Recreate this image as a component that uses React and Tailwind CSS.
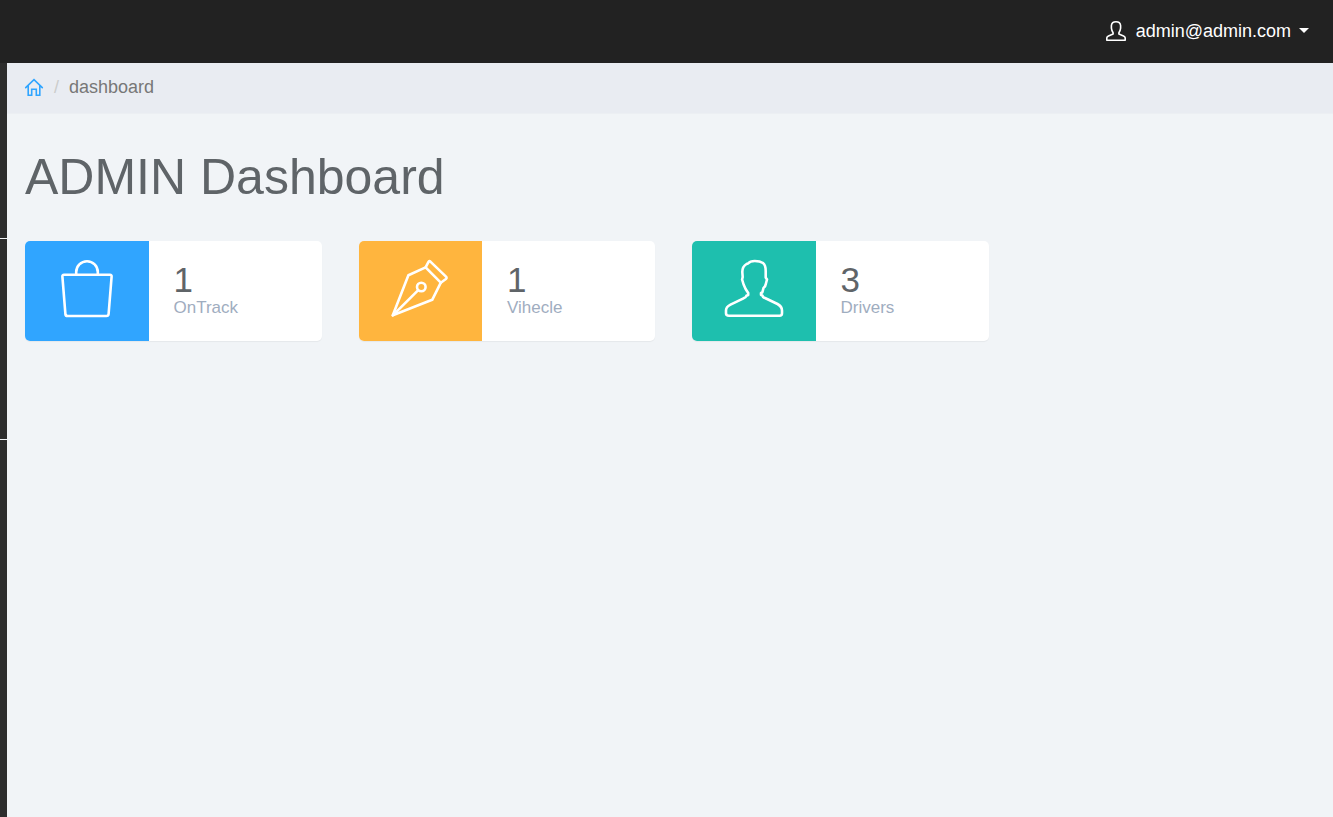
const iconProps = {
  fill: 'none',
  stroke: 'currentColor',
  strokeLinecap: 'round',
  strokeLinejoin: 'round',
  'aria-hidden': true,
};

function BagIcon() {
  return (
    <svg viewBox="0 0 60 60" className="size-[60px]" strokeWidth="2.6" {...iconProps}>
      <path d="M7 15.800H53Q54.800 15.800 54.600 17.600L51.600 55Q51.400 57 49.400 57H10.600Q8.600 57 8.400 55L5.400 17.600Q5.200 15.800 7 15.800Z" />
      <path d="M19.200 15.500V13A10.800 10.800 0 0 1 40.800 13V15.500" />
    </svg>
  );
}

function PenIcon() {
  return (
    <svg viewBox="0 0 60 60" className="size-[60px]" strokeWidth="2.6" {...iconProps}>
      <path d="M2.800 56.300 18.400 16.300 35.600 8.400 50.800 23.700 42.200 40.800Z" />
      <path d="M35.600 8.400 38.500 2.800Q39.200 1.600 40.400 2.600L56 17.600Q57.200 18.900 55.900 20L50.800 23.700" />
      <circle cx="31.300" cy="28" r="4.300" />
      <path d="M2.800 56.300 28.200 31.100" />
    </svg>
  );
}

function DriverIcon() {
  return (
    <svg viewBox="0 0 60 60" className="size-[60px]" strokeWidth="2.6" {...iconProps}>
      <path d="M5 56.800H55.500Q58 56.800 58 54.300V51.500Q58 47.500 53.500 45L41 39Q38.800 38.500 38.500 36.700L37 35.800V34L38.300 33.500L39.500 29Q41.500 27.500 41.800 25L43 20.500L41.700 18.500V12Q41.700 6 39 4Q36 2 30.800 2Q26 2 24 4.500L22.500 5Q18.300 7.500 18.300 13L18.700 18L18.100 20.500L19.600 25.500L21.600 30L24.200 34V36L22.400 36.700Q22 38.300 19.500 39.300L6.500 45.700Q2 48 2 51.500V54.300Q2 56.800 5 56.800Z" />
    </svg>
  );
}

function AccountIcon() {
  return (
    <svg viewBox="0 0 20 20" className="mr-2.5 size-5" strokeWidth="1.6" {...iconProps}>
      <path d="M.8 19.200H19.200V16.800Q19 15.500 17.500 14.900L12.900 13V11.800Q14.300 10 14.600 7.200V4.500Q14.200 .8 10 .8Q5.800 .8 5.400 4.500V7.200Q5.700 10 7.100 11.800V13L2.500 14.900Q1 15.500 .8 16.800Z" />
    </svg>
  );
}

function HomeIcon() {
  return (
    <svg viewBox="0 0 20 20" className="size-5" strokeWidth="1.6" {...iconProps}>
      <path d="M1.700 10.700 10 2.700 18.300 10.700M4.200 8.800V18.200H7.700V12.200H12.300V18.200H15.800V8.800" strokeLinejoin="miter" />
    </svg>
  );
}

const stats = [
  { label: 'OnTrack', value: 1, color: 'bg-[#30a5ff]', icon: <BagIcon /> },
  { label: 'Vihecle', value: 1, color: 'bg-[#ffb53e]', icon: <PenIcon /> },
  { label: 'Drivers', value: 3, color: 'bg-[#1ebfae]', icon: <DriverIcon /> },
];

function StatCard({ label, value, color, icon }) {
  return (
    <article className="flex h-[100px] overflow-hidden rounded-[5px] bg-white shadow-[0_1px_1px_rgba(0,0,0,0.05)]">
      <div className={`flex w-5/12 items-center justify-center pb-1 text-white ${color}`}>{icon}</div>
      <div className="flex flex-col pt-5 pl-[25px]">
        <div className="text-[35px] leading-[38px] text-[#5f6468]">{value}</div>
        <div className="text-[17px] leading-[18px] text-[#9fadbf]">{label}</div>
      </div>
    </article>
  );
}

export default function App() {
  return (
    <div className="flex min-h-screen flex-col bg-[#f1f4f7] font-['Liberation_Sans',Arial,sans-serif]">
      <header className="flex h-[63px] shrink-0 items-center justify-end bg-[#222222] pr-6 pb-0.5">
        <button type="button" className="flex items-center text-[18px] leading-6 text-white">
          <AccountIcon />
          admin@admin.com
          <span className="ml-2 border-x-[5px] border-t-[5px] border-x-transparent border-t-white" />
        </button>
      </header>
      <div className="flex grow">
        <aside className="w-[7px] shrink-0 bg-[#2d2d2d]">
          <div className="h-[175px]" />
          <div className="h-[201px] border-t border-[#f1f4f7]" />
          <div className="border-t border-[#f1f4f7]" />
        </aside>
        <main className="min-w-0 grow">
          <nav aria-label="Breadcrumb" className="h-[51px] border-b border-[#eceff3] bg-[#e9ecf2] px-[17px] pt-3">
            <ol className="flex items-center text-[18px] leading-6 text-[#777777]">
              <li>
                <a href="#" aria-label="Home" className="block text-[#30a5ff]">
                  <HomeIcon />
                </a>
              </li>
              <li className="px-2.5 text-[#cccccc]" aria-hidden="true">/</li>
              <li>dashboard</li>
            </ol>
          </nav>
          <div className="pr-[11px] pl-[18px]">
            <h1 className="pt-9 text-[50px] leading-[55px] text-[#5f6468]">ADMIN Dashboard</h1>
            <section className="mt-9 grid grid-cols-4 gap-[37px]">
              {stats.map((stat) => (
                <StatCard key={stat.label} {...stat} />
              ))}
            </section>
          </div>
        </main>
      </div>
    </div>
  );
}
